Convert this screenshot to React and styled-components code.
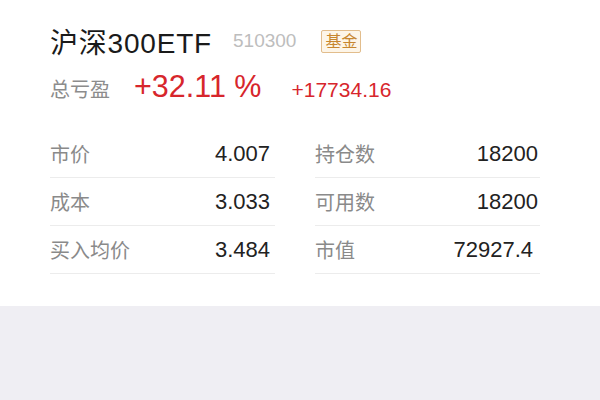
import React from "react";
import styled, { createGlobalStyle } from "styled-components";

const GlobalStyle = createGlobalStyle`
  html, body {
    margin: 0;
    padding: 0;
    background: #efeef3;
  }
  body {
    font-family: "Liberation Sans", "Noto Sans CJK SC", sans-serif;
  }
`;

const Card = styled.div`
  background: #fff;
  padding: 20px 60px 32px 50px;
`;

const TitleRow = styled.div`
  display: flex;
  align-items: center;
  height: 42px;
`;

const Name = styled.h1`
  margin: 0;
  font-size: 28px;
  font-weight: 400;
  letter-spacing: 0.8px;
  color: #1a1a1a;
`;

const Code = styled.span`
  margin-left: 21px;
  font-size: 19px;
  color: #bdbdbd;
`;

const Badge = styled.span`
  margin-left: 25px;
  padding: 1px 3px;
  font-size: 16px;
  line-height: 19px;
  color: #c7862f;
  background: #fdf5e8;
  border: 1px solid #e2bd8c;
  border-radius: 2px;
`;

const ProfitRow = styled.div`
  display: flex;
  align-items: baseline;
  height: 40px;
  margin-top: 7px;
`;

const ProfitLabel = styled.span`
  font-size: 20px;
  color: #8c8c8c;
`;

const Percent = styled.span`
  margin-left: 24px;
  font-size: 30.5px;
  color: #d7262c;
`;

const Amount = styled.span`
  margin-left: 30px;
  font-size: 21px;
  color: #d7262c;
`;

const Table = styled.div`
  display: grid;
  grid-template-columns: 225px 225px;
  column-gap: 40px;
  margin-top: 21px;
`;

const Cell = styled.div`
  display: flex;
  align-items: center;
  justify-content: space-between;
  height: 47px;
  border-bottom: 1px solid #ececec;
`;

const Label = styled.span`
  font-size: 20px;
  color: #8a8a8a;
`;

const Value = styled.span`
  font-size: 22px;
  color: #222;
  padding-right: ${(p) => p.$inset}px;
`;

const rows = [
  [{ label: "市价", value: "4.007", inset: 5 }, { label: "持仓数", value: "18200", inset: 2 }],
  [{ label: "成本", value: "3.033", inset: 5 }, { label: "可用数", value: "18200", inset: 2 }],
  [{ label: "买入均价", value: "3.484", inset: 5 }, { label: "市值", value: "72927.4", inset: 7 }],
];

export default function App() {
  return (
    <>
      <GlobalStyle />
      <Card>
        <TitleRow>
          <Name>沪深300ETF</Name>
          <Code>510300</Code>
          <Badge>基金</Badge>
        </TitleRow>
        <ProfitRow>
          <ProfitLabel>总亏盈</ProfitLabel>
          <Percent>+32.11 %</Percent>
          <Amount>+17734.16</Amount>
        </ProfitRow>
        <Table>
          {rows.flat().map((c) => (
            <Cell key={c.label}>
              <Label>{c.label}</Label>
              <Value $inset={c.inset}>{c.value}</Value>
            </Cell>
          ))}
        </Table>
      </Card>
    </>
  );
}
